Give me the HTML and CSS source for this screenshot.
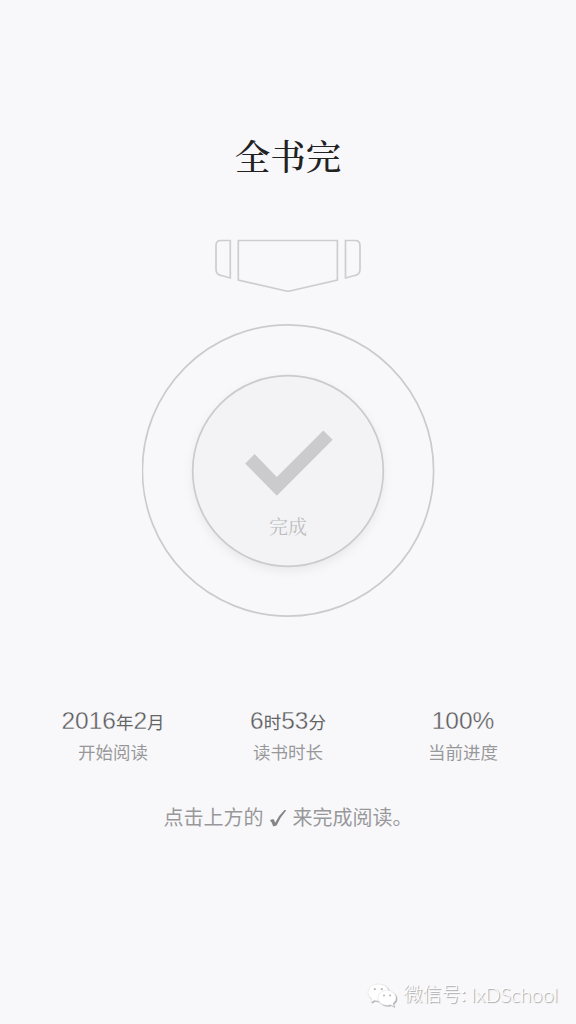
FILE: index.html
```html
<!DOCTYPE html>
<html lang="zh-CN">
<head>
<meta charset="utf-8">
<title>全书完</title>
<link rel="stylesheet" href="styles.css">
</head>
<body>
<main class="page">
  <h1 class="title">全书完</h1>
  <svg class="ribbon" viewBox="0 0 148 56" width="148" height="56">
    <path d="M16.300 2.500H7Q2 2.500 2 7.500V31.500Q2 36.200 6.500 37.300L16.300 40Z"/>
    <path d="M24.300 2.500H123.400V42L78 52.500Q74 53.800 70 52.500L24.300 42Z"/>
    <path d="M131.500 2.500H141Q146 2.500 146 7.500V31.500Q146 36.200 141.500 37.300L131.500 40Z"/>
  </svg>
  <div class="ring">
    <svg class="outlines" viewBox="0 0 293 293" width="293" height="293">
      <circle cx="146" cy="146.500" r="145.600"/>
      <circle class="disc" cx="146" cy="147" r="95.300"/>
    </svg>
    <div class="seal">
      <svg class="check" viewBox="0 0 88 66" width="88" height="66"><path d="M10.600 23.900L1.200 33.500L32.800 65.700L88.700 9.800L79.300 0.400L32.800 46.900Z"/></svg>
      <span class="done">完成</span>
    </div>
  </div>
  <section class="stats">
    <div class="stat"><p class="value">2016<small>年</small>2<small>月</small></p><p class="label">开始阅读</p></div>
    <div class="stat"><p class="value">6<small>时</small>53<small>分</small></p><p class="label">读书时长</p></div>
    <div class="stat"><p class="value">100%</p><p class="label">当前进度</p></div>
  </section>
  <p class="hint"><span>点击上方的</span><svg class="tick" viewBox="0 0 18 20" width="18" height="20"><path d="M1 12.300Q2.500 10.900 4.800 11.300L6.200 14.800Q10 7 15.500 2L17.300 2.300Q11 9.500 7.600 17.500Q5.500 18 4.200 18.600Q3.500 15 1 12.300Z"/></svg><span>来完成阅读。</span></p>
  <footer class="credit">
    <svg class="wechat" viewBox="0 0 30 25" width="30" height="25">
      <path class="bubble" d="M11.500 1C5.500 1 1 4.700 1 9.500C1 12.300 2.500 14.600 4.900 16.100L3.900 19.200L7.500 17.300Q9.500 18 11.500 18C17.500 18 22 14.300 22 9.500S17.500 1 11.500 1Z"/>
      <path class="bubble" d="M19.800 7.300C14.800 7.300 11 10.700 11 14.800S14.800 22.300 19.800 22.300Q21.800 22.300 23.500 21.700L26.800 23.400L25.900 20.500C27.800 19.100 29 17.100 29 14.800C29 10.700 24.900 7.300 19.800 7.300Z"/>
      <g class="eyes"><circle cx="7.800" cy="6.200" r="1.100"/><circle cx="14.800" cy="6.200" r="1.100"/><circle cx="17" cy="12.600" r="1"/><circle cx="23" cy="12.600" r="1"/></g>
    </svg>
    <span class="credit-label">微信号:</span><span class="account">IxDSchool</span>
  </footer>
</main>
</body>
</html>
```
FILE: styles.css
```css
* { box-sizing: border-box; }
body { margin: 0; background: #f8f8fa; }
p, h1 { margin: 0; }
.page {
  height: 1024px;
  padding-top: 129px;
  display: flex;
  flex-direction: column;
  align-items: center;
  overflow: hidden;
  font-family: "Liberation Sans", "Noto Sans CJK SC", sans-serif;
}
.title {
  height: 52px;
  line-height: 52px;
  font-family: "Noto Serif CJK SC", "Songti SC", "Noto Sans CJK SC", serif;
  font-size: 35.500px;
  font-weight: 500;
  color: #222;
}
.ribbon { margin-top: 57px; fill: none; stroke: #cdcdcf; stroke-width: 1.7; }
.ring {
  position: relative;
  width: 293px;
  height: 293px;
  margin-top: 30px;
  display: flex;
  align-items: center;
  justify-content: center;
}
.outlines { position: absolute; inset: 0; fill: none; stroke: #cbcbcd; stroke-width: 1.7; }
.disc { fill: #f3f3f5; filter: drop-shadow(0 4px 5px rgba(0, 0, 0, .06)); }
.seal {
  position: relative;
  width: 192px;
  height: 192px;
  padding-top: 55px;
  display: flex;
  flex-direction: column;
  align-items: center;
}
.check { fill: #cbcbcd; overflow: visible; }
.done {
  margin-top: 16px;
  line-height: 28px;
  font-family: "Noto Serif CJK SC", "Songti SC", "Noto Sans CJK SC", serif;
  font-size: 19px;
  font-weight: 400;
  color: #bdbdbf;
}
.stats {
  width: 525px;
  margin-top: 88px;
  display: grid;
  grid-template-columns: repeat(3, 1fr);
  text-align: center;
}
.value {
  height: 32px;
  line-height: 32px;
  white-space: nowrap;
  font-size: 24.500px;
  color: #5c5c5e;
  -webkit-text-stroke: .35px #f8f8fa;
}
.value small { font-size: 17.500px; color: #646466; -webkit-text-stroke: 0; }
.label { height: 32px; line-height: 32px; font-size: 17.500px; color: #98989a; }
.hint {
  margin-top: 33px;
  height: 32px;
  line-height: 32px;
  display: flex;
  align-items: center;
  font-size: 20px;
  color: #98989a;
}
.tick { margin: 0 6px 0 5px; fill: #858587; }
.credit {
  align-self: flex-end;
  margin: 146px 18px 0 0;
  height: 30px;
  line-height: 30px;
  display: flex;
  align-items: center;
  font-size: 19px;
  font-weight: 300;
  color: #fff;
  text-shadow: 1px 1px 1px #999;
}
.wechat { margin-right: 6px; filter: drop-shadow(1px 1px .5px #aaa); }
.bubble { fill: #fff; stroke: #e0e0e2; stroke-width: .6; }
.eyes { fill: #b8b8ba; }
.account { margin: -2px 0 0 5px; font-family: Lato, sans-serif; font-size: 20px; }
```
